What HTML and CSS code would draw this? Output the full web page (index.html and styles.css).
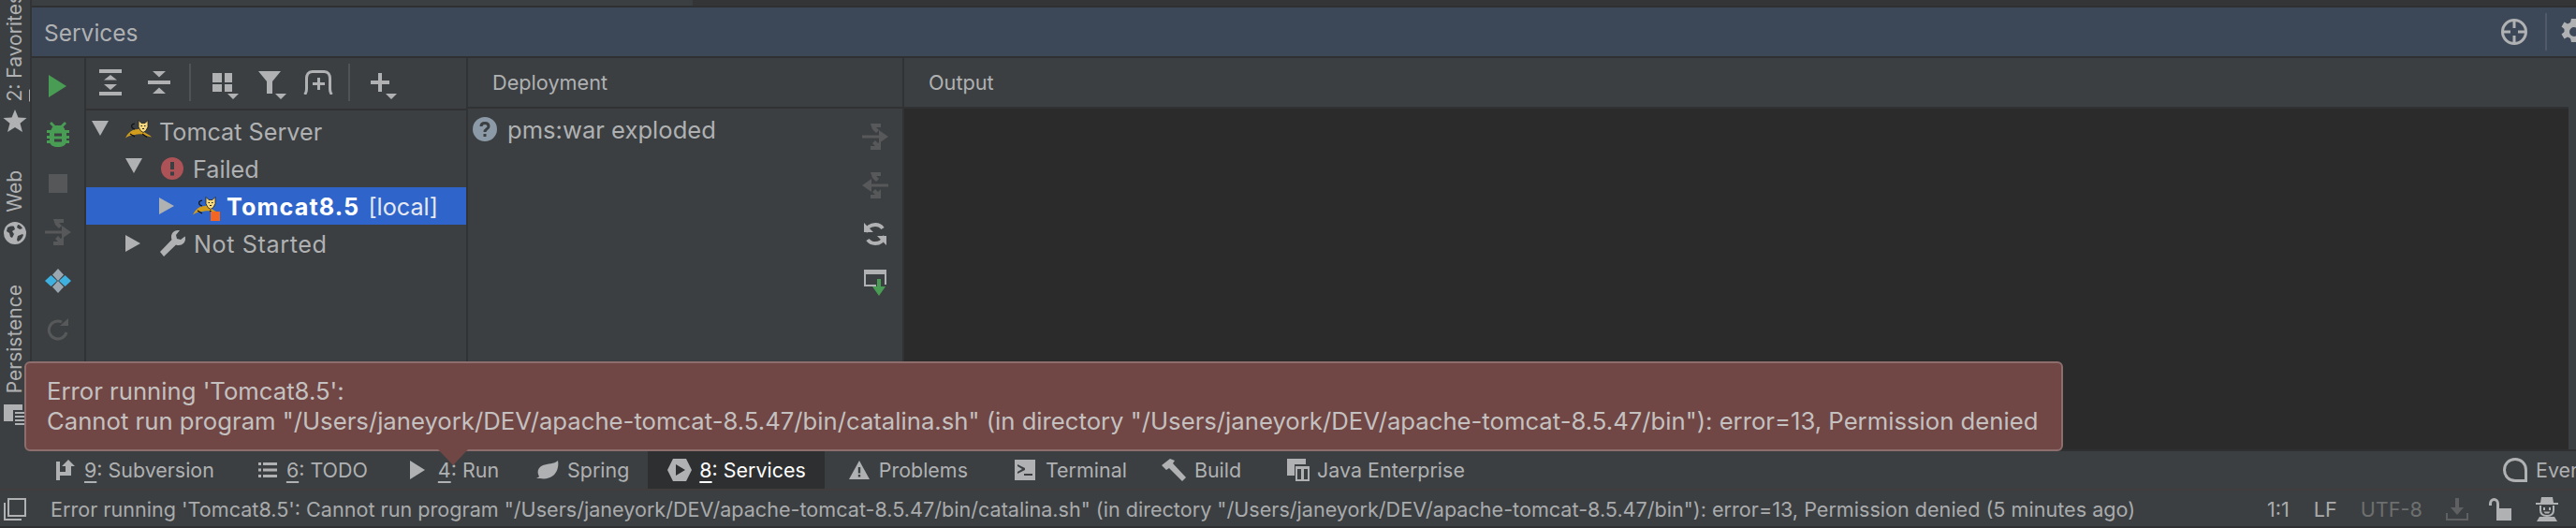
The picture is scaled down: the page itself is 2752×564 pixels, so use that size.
FILE: index.html
```html
<!DOCTYPE html>
<html lang="en">
<head>
<meta charset="utf-8">
<title>Services</title>
<link rel="stylesheet" href="styles.css">
</head>
<body>
<div class="app">
  <div class="main">
    <aside class="sidebar">
      <div class="side-group fav">
        <span class="vtext"><u>2</u>: Favorites</span>
        <svg class="side-icon" width="26" height="24" viewBox="0 0 26 24"><polygon class="f-lt" points="13,0 16.5,8.5 25.5,9 18.5,14.8 21,24 13,19 5,24 7.500,14.8 0.500,9 9.500,8.500"/></svg>
      </div>
      <div class="side-group web">
        <span class="vtext">Web</span>
        <svg class="side-icon" width="24" height="24" viewBox="0 0 24 24"><circle class="f-lt" cx="12" cy="12" r="12"/><path class="f-bg" d="M4 6c2-1 5-2 7-1l1 3-3 2 2 3-2 4-2-1-1-4-3-2zM15 15l5-2 1 1c-1 3-3 6-6 7l-1-2zM15 3c2 0 4 2 5 4l-3 1-3-2z"/></svg>
      </div>
      <div class="side-group persist">
        <span class="vtext">Persistence</span>
        <svg class="side-icon" width="24" height="24" viewBox="0 0 24 24"><path class="f-lt" d="M0 0h20v6H10v12H0z"/><path class="f-lt" d="M12 8h12v2H12zM12 12h12v2H12zM12 16h12v2H12zM12 20h12v2H12z"/></svg>
      </div>
    </aside>
    <div class="content">
      <div class="top-strip"><div class="top-strip-left"></div></div>
      <header class="title-bar">
        <span class="title">Services</span>
        <div class="title-actions">
          <svg width="28" height="28" viewBox="0 0 28 28"><circle class="s-lt" cx="14" cy="14" r="12.500" stroke-width="3"/><path class="f-lt" d="M12.500 2h3v8h-3zM12.500 18h3v8h-3zM2 12.500h8v3H2zM18 12.500h8v3h-8z"/></svg>
          <span class="title-sep"></span>
          <svg class="gear" width="28" height="28" viewBox="0 0 28 28"><path class="f-lt" fill-rule="evenodd" d="M11 0h6l1 4 3 1.500 3.500-2 3 5-3 2.500v3l3 2.500-3 5-3.500-2-3 1.500-1 4h-6l-1-4-3-1.500-3.500 2-3-5 3-2.500v-3l-3-2.500 3-5 3.500 2 3-1.500zM14 9a5 5 0 1 0 0 10 5 5 0 0 0 0-10z"/></svg>
        </div>
      </header>
      <div class="panes">
        <div class="action-bar">
          <span class="act"><svg width="20" height="24" viewBox="0 0 20 24"><polygon class="f-green" points="0,0 19,12 0,24"/></svg></span>
          <span class="act"><svg width="24" height="28" viewBox="0 0 24 28"><path class="f-green" fill-rule="evenodd" d="M5 0l4 4h6l4-4 2 2-3.500 3.500c1 1 1.500 2 2 3.500H24v3h-3v3h3v3h-3v2h3v3h-3.500c-1 2-3 4-8.500 4s-7.500-2-8.500-4H0v-3h3v-2H0v-3h3v-3H0V9h4.500c.5-1.500 1-2.500 2-3.500L3 2zM8 12.500v3h8v-3zM8 18.500v3h8v-3z"/></svg></span>
          <span class="act"><span class="stop"></span></span>
          <span class="act"><svg class="dim" width="28" height="28" viewBox="0 0 28 28"><use href="#deploy"/></svg></span>
          <span class="act"><svg width="28" height="26" viewBox="0 0 28 26"><polygon class="f-slate" points="14,0 20,6.500 14,13 8,6.500"/><polygon class="f-slate" points="14,13 20,19.500 14,26 8,19.500"/><polygon class="f-blue" points="6.500,7 13,13 6.500,19 0,13"/><polygon class="f-blue" points="21.500,7 28,13 21.500,19 15,13"/></svg></span>
          <span class="act"><svg width="24" height="25" viewBox="0 0 24 25"><path class="s-dim" d="M21 15a9.500 9.500 0 1 1-5-11" stroke-width="3"/><polygon class="f-dim" points="14,8 23,8 23,0"/></svg></span>
        </div>
        <section class="tree-col">
          <div class="tree-toolbar">
            <span class="tool"><svg width="24" height="28" viewBox="0 0 24 28"><path class="f-lt" d="M0 0h24v4H0zM0 24h24v4H0zM12 6l7 5.500H5zM5 16h14l-7 6z"/></svg></span>
            <span class="tool"><svg width="24" height="24" viewBox="0 0 24 24"><path class="f-lt" d="M5 0h14l-7 6.500zM0 10h24v4H0zM12 17.500l7 6.500H5z"/></svg></span>
            <span class="tool-sep"></span>
            <span class="tool tool-group"><svg width="28" height="28" viewBox="0 0 28 28"><path class="f-lt" d="M0 0h10v10H0zM13 0h8v10h-8zM0 12h10v8H0zM13 12h8v8h-8zM16 22h12l-6 6z"/></svg></span>
            <span class="tool tool-filter"><svg width="30" height="30" viewBox="0 0 30 30"><path class="f-lt" d="M0 0h24l-9 11v13H9V11zM18 24h12l-6 6z"/></svg></span>
            <span class="tool"><svg width="32" height="26" viewBox="0 0 32 26"><path class="s-lt" d="M1.500 26c2-2 2-3 2-6V9c0-4 2-7.500 6-7.500h13c4 0 6 3.500 6 7.500v11c0 3 0 4 2 6" stroke-width="3"/><path class="f-lt" d="M15 8h3v5h5v3h-5v5h-3v-5h-5v-3h5z"/></svg></span>
            <span class="tool-sep"></span>
            <span class="tool tool-add"><svg width="28" height="28" viewBox="0 0 28 28"><path class="f-lt" d="M8 0h4v8h8v4h-8v8H8v-8H0V8h8zM16 22h12l-6 6z"/></svg></span>
          </div>
          <ul class="tree">
            <li class="row depth-0">
              <svg class="arrow" width="18" height="16" viewBox="0 0 18 16"><polygon class="f-lt" points="0,0 18,0 9,16"/></svg>
              <svg class="cat" width="28" height="20" viewBox="0 0 28 20"><use href="#tomcat"/></svg>
              <span class="label">Tomcat Server</span>
            </li>
            <li class="row depth-1">
              <svg class="arrow" width="18" height="16" viewBox="0 0 18 16"><polygon class="f-lt" points="0,0 18,0 9,16"/></svg>
              <svg class="status-icon" width="24" height="24" viewBox="0 0 24 24"><circle class="f-red" cx="12" cy="12" r="12"/><path class="f-bg" d="M10 5h4v8h-4zM10 15.500h4v4h-4z"/></svg>
              <span class="label">Failed</span>
            </li>
            <li class="row depth-2 selected">
              <svg class="arrow" width="16" height="18" viewBox="0 0 16 18"><polygon class="f-lt" points="0,0 16,9 0,18"/></svg>
              <span class="cat-wrap">
                <svg class="cat" width="28" height="20" viewBox="0 0 28 20"><use href="#tomcat"/></svg>
                <span class="badge"></span>
              </span>
              <span class="label"><b>Tomcat8.5</b> [local]</span>
            </li>
            <li class="row depth-1b">
              <svg class="arrow" width="16" height="18" viewBox="0 0 16 18"><polygon class="f-lt" points="0,0 16,9 0,18"/></svg>
              <svg class="status-icon" width="27" height="28" viewBox="0 0 27 28"><path class="f-lt" d="M19 0c-4 0-7 3-7 7 0 1 0 2 .5 3L0 23l4 5 13-12.500c1 .5 2 .5 3 .5 4 0 7-3 7-7 0-1 0-2-.5-2.500L22 10l-4-1-1-4 4-5c-.5 0-1.500 0-2 0z"/></svg>
              <span class="label">Not Started</span>
            </li>
          </ul>
        </section>
        <section class="deploy-col">
          <div class="pane-head">Deployment</div>
          <div class="deploy-body">
            <div class="deploy-list">
              <svg class="q" width="26" height="26" viewBox="0 0 26 26"><circle class="f-slate2" cx="13" cy="13" r="13"/><path class="s-bg" d="M9 10c0-2.500 2-3.500 4-3.500s4 1 4 3.500c0 3-4 2.500-4 6" stroke-width="3"/><path class="f-bg" d="M11.500 18h3v3h-3z"/></svg>
              <span class="label">pms:war exploded</span>
            </div>
            <div class="deploy-tools">
              <span class="act"><svg class="dim" width="28" height="28" viewBox="0 0 28 28"><use href="#deploy"/></svg></span>
              <span class="act"><svg class="dim" width="28" height="28" viewBox="0 0 28 28"><use href="#undeploy"/></svg></span>
              <span class="act"><svg width="24" height="24" viewBox="0 0 24 24"><path class="s-lt" d="M2 10C3 5 7 2 12 2c3 0 6 1 8 4M22 14c-1 5-5 8-10 8-3 0-6-1-8-4" stroke-width="4"/><path class="f-lt" d="M0 0v10h10zM24 24V14H14z"/></svg></span>
              <span class="act"><svg width="24" height="28" viewBox="0 0 24 28"><path class="f-lt" d="M0 0h24v16h-2V5H2v11h11v2H0z"/><path class="f-green" d="M14 10h4v8h5l-7 10-7-10h5z"/></svg></span>
            </div>
          </div>
        </section>
        <section class="output-col">
          <div class="pane-head">Output</div>
          <div class="output-body"></div>
        </section>
        <div class="right-strip"></div>
      </div>
    </div>
  </div>

  <nav class="tabs">
    <div class="tab t-svn"><svg width="20" height="22" viewBox="0 0 20 22"><path class="f-lt" d="M0 2h4v20H0zM4 13h6V7H6l7-7 7 7h-4v10H4z"/></svg><span><u>9</u>: Subversion</span></div>
    <div class="tab t-todo"><svg width="20" height="16" viewBox="0 0 20 16"><path class="f-lt" d="M0 0h3v3H0zM5 0h15v3H5zM0 6.500h3v3H0zM5 6.500h15v3H5zM0 13h3v3H0zM5 13h15v3H5z"/></svg><span><u>6</u>: TODO</span></div>
    <div class="tab t-run"><svg width="16" height="20" viewBox="0 0 16 20"><polygon class="f-lt" points="0,0 16,10 0,20"/></svg><span><u>4</u>: Run</span></div>
    <div class="tab t-spring"><svg width="24" height="20" viewBox="0 0 24 20"><path class="f-lt" d="M23 0c1 5 0 12-5 16-4 3-9 4-14 3l-4 0c2-1 3-2 3-2C0 12 2 7 7 5c5-2 12-1 16-5z"/></svg><span>Spring</span></div>
    <div class="tab t-services active"><svg width="26" height="24" viewBox="0 0 26 24"><path class="f-lt" fill-rule="evenodd" d="M6 0h14l6 12-6 12H6L0 12zM9 6v12l10-6z"/></svg><span><u>8</u>: Services</span></div>
    <div class="tab t-problems"><svg width="22" height="20" viewBox="0 0 22 20"><path class="f-lt" fill-rule="evenodd" d="M11 0l11 20H0zM9.800 7v6.500h2.400V7zM9.800 15v2.500h2.400V15z"/></svg><span>Problems</span></div>
    <div class="tab t-term"><svg width="22" height="22" viewBox="0 0 22 22"><path class="f-lt" fill-rule="evenodd" d="M0 0h22v22H0zM3 5v2l5 3-5 3v2l8-4v-2zM10 15v2h9v-2z"/></svg><span>Terminal</span></div>
    <div class="tab t-build"><svg width="26" height="24" viewBox="0 0 26 24"><path class="f-lt" d="M0 7l9-7 5 2-2 3 14 15-4 4L8 10l-3 2z"/></svg><span>Build</span></div>
    <div class="tab t-java"><svg width="24" height="24" viewBox="0 0 24 24"><path class="f-lt" d="M0 0h20v6H8v12H0z"/><path class="f-lt" fill-rule="evenodd" d="M9 8h15v16H9zM11 11v11h4V11zM18 11v11h4V11z"/></svg><span>Java Enterprise</span></div>
    <div class="tab t-events"><svg width="26" height="26" viewBox="0 0 26 26"><path class="s-lt" d="M13 1.500c6.500 0 11.500 5 11.500 11.500v11.500H13C6.500 24.500 1.500 19.500 1.500 13S6.500 1.500 13 1.500z" stroke-width="3"/></svg><span>Event Log</span></div>
  </nav>

  <footer class="status">
    <svg class="status-toggle" width="24" height="24" viewBox="0 0 24 24"><path class="s-lt" d="M5 1h18v18H5zM1 5v18h18" stroke-width="2"/></svg>
    <span class="status-msg">Error running 'Tomcat8.5': Cannot run program "/Users/janeyork/DEV/apache-tomcat-8.5.47/bin/catalina.sh" (in directory "/Users/janeyork/DEV/apache-tomcat-8.5.47/bin"): error=13, Permission denied (5 minutes ago)</span>
    <span class="status-item pos">1:1</span>
    <span class="status-item lf">LF</span>
    <span class="status-item enc">UTF-8</span>
    <svg class="st-dl" width="24" height="24" viewBox="0 0 24 24"><path class="f-dim2" d="M10 0h4v10h5l-7 8-7-8h5zM0 16h2v6h20v-6h2v8H0z"/></svg>
    <svg class="st-lock" width="24" height="24" viewBox="0 0 24 24"><path class="f-lt" d="M8 11h16v13H8z"/><path class="s-lt" d="M1.500 8V6c0-2.500 2-4.500 4-4.500S9.500 3.500 9.500 6v5" stroke-width="3"/></svg>
    <svg class="st-hector" width="24" height="26" viewBox="0 0 24 26"><path class="f-lt" d="M6 0h12l1 6h5v2H0V6h5z"/><path class="s-lt" d="M5 9v5c0 4 3 6 7 6s7-2 7-6V9" stroke-width="2"/><path class="f-lt" d="M8 11h2v3H8zM14 11h2v3h-2zM8.500 15.500h7l-1.500 2h-4zM4 21h16l3 5H1z"/></svg>
  </footer>

  <div class="balloon">
    <p>Error running 'Tomcat8.5':</p>
    <p>Cannot run program "/Users/janeyork/DEV/apache-tomcat-8.5.47/bin/catalina.sh" (in directory "/Users/janeyork/DEV/apache-tomcat-8.5.47/bin"): error=13, Permission denied</p>
    <svg class="balloon-tip" width="32" height="18" viewBox="0 0 32 18"><polygon class="tip-fill" points="0,0 32,0 16,17"/></svg>
  </div>

  <svg class="defs" width="0" height="0">
    <defs>
      <g id="deploy">
        <path d="M0 12.500h18v3H0zM18 7l10 7-10 7z"/>
        <path d="M9 0h11v4l-5 0 3 3-3 3-4-4zM9 28h11V18l-3 3-3-3-3 3 3 3H9z"/>
      </g>
      <g id="undeploy">
        <path d="M10 12.500h18v3H10zM10 7L0 14l10 7z"/>
        <path d="M9 0h11v4l-5 0 3 3-3 3-4-4zM9 28h11V18l-3 3-3-3-3 3 3 3H9z"/>
      </g>
      <g id="tomcat">
        <path fill="#d29c1d" d="M0 19.500C3 13 8 10 13 10l4-1 3 4c2 2 6 3 8 5.500l-6-1.500c-4-2-8-2-12-1-4 0-7 1.500-10 3.500z"/>
        <path fill="none" stroke="#111" stroke-width="1.200" d="M10 10C6 9 5 5 10 4M5 15l5 3M18 15l5 3.500"/>
        <path fill="#f5d77e" stroke="#222" stroke-width=".8" d="M14 .5l3 3h4l3-3v7l-2 4-3 2-3-2-2-4z"/>
        <path fill="#222" d="M16.500 6h1.500v1h-1.500zM20 6h1.500v1H20zM18 9h2v1h-2z"/>
      </g>
    </defs>
  </svg>
</div>
</body>
</html>
```
FILE: styles.css
```css
* { box-sizing: border-box; }
html, body { margin: 0; padding: 0; }
body { background: #3c3f41; color: #afb1b3; font-family: Inter, Roboto, "Liberation Sans", sans-serif; font-size: 21.45px; }
ul { list-style: none; margin: 0; padding: 0; }
p { margin: 0; }
svg { display: block; flex: none; }
u { text-underline-offset: 4px; text-decoration-thickness: 2px; }

.f-lt { fill: #afb1b3; }
.f-bg { fill: #3c3f41; }
.f-dim { fill: #565859; }
.f-dim2 { fill: #5e6061; }
.f-green { fill: #499c54; }
.f-red { fill: #ad5256; }
.f-blue { fill: #3eb1e1; }
.f-slate { fill: #9aa7b0; }
.f-slate2 { fill: #8b9aa6; }
.s-lt { fill: none; stroke: #afb1b3; }
.s-dim { fill: none; stroke: #565859; }
.s-bg { fill: none; stroke: #3c3f41; }
.dim { fill: #565859; }

.app { position: relative; width: 2752px; height: 564px; overflow: hidden; display: flex; flex-direction: column; }
.main { display: flex; height: 482px; flex: none; }

.sidebar { width: 34px; flex: none; border-right: 2px solid #313335; overflow: hidden; display: flex; flex-direction: column; align-items: center; }
.side-group { display: flex; flex-direction: column; align-items: center; flex: none; }
.vtext { writing-mode: vertical-rl; transform: rotate(180deg); font-size: 21px; line-height: 26px; white-space: nowrap; }
.fav { margin-top: -7px; }
.fav .side-icon { margin-top: 9px; }
.web { margin-top: 41px; }
.web .side-icon { margin-top: 10px; }
.persist { margin-top: 43px; }
.persist .side-icon { margin-top: 12px; }

.content { flex: 1; min-width: 0; display: flex; flex-direction: column; }
.top-strip { height: 8px; flex: none; background: #333536; border-bottom: 2px solid #2f3031; }
.top-strip-left { width: 706px; height: 6px; background: #3c3f41; }
.title-bar { height: 54px; flex: none; background: #3c4757; border-bottom: 2px solid #2f3031; display: flex; align-items: center; justify-content: space-between; padding: 2px 0 0 13px; }
.title { font-size: 24.500px; }
.title-actions { display: flex; align-items: center; margin-right: -12px; margin-top: -2px; }
.title-sep { width: 2px; height: 40px; background: #50596a; margin-left: 19px; margin-right: 15px; }

.panes { flex: 1; min-height: 0; display: flex; border-bottom: 2px solid #2f3031; }
.action-bar { width: 58px; flex: none; border-right: 2px solid #303233; padding-top: 4px; display: flex; flex-direction: column; }
.act { height: 52px; display: flex; align-items: center; justify-content: center; flex: none; }
.stop { width: 20px; height: 20px; background: #555758; }

.tree-col { width: 408px; flex: none; border-right: 2px solid #303233; display: flex; flex-direction: column; }
.tree-toolbar { height: 56px; flex: none; border-bottom: 2px solid #303233; display: flex; align-items: center; padding-bottom: 2px; }
.tool { width: 52px; display: flex; align-items: center; justify-content: center; }
.tool-group { padding: 8px 0 0 10px; }
.tool-filter { padding: 6px 0 0 6px; }
.tool-add { padding: 8px 0 0 8px; }
.tool-sep { width: 2px; height: 40px; background: #505254; margin: 0 6px; }
.tree { padding-top: 2px; }
.row { height: 40px; display: flex; align-items: center; font-size: 25.200px; }
.row .label { white-space: pre; padding-top: 2px; }
.depth-0 { padding-left: 6px; }
.depth-0 .arrow { margin-top: -6px; }
.depth-0 .cat { margin-left: 18px; margin-top: -4px; }
.depth-0 .label { margin-left: 8px; }
.depth-1 { padding-left: 42px; }
.depth-1 .arrow { margin-top: -6px; }
.depth-1 .status-icon { margin-left: 20px; }
.depth-1 .label { margin-left: 10px; }
.depth-2 { padding-left: 78px; background: #2f65ca; color: #e6e9f0; }
.depth-2 b { color: #fff; font-weight: 700; letter-spacing: 1.100px; margin-right: 2px; }
.depth-2 .cat-wrap { position: relative; margin-left: 20px; }
.badge { position: absolute; right: -1px; bottom: -6px; width: 10px; height: 10px; background: #f26522; }
.depth-2 .label { margin-left: 8px; }
.depth-1b { padding-left: 42px; }
.depth-1b .status-icon { margin-left: 21px; }
.depth-1b .label { margin-left: 9px; letter-spacing: .6px; }

.deploy-col { width: 466px; flex: none; border-right: 2px solid #303233; display: flex; flex-direction: column; }
.pane-head { height: 54px; flex: none; border-bottom: 2px solid #303233; display: flex; align-items: center; padding-left: 26px; font-size: 21.700px; }
.deploy-body { flex: 1; display: flex; min-height: 0; }
.deploy-list { flex: 1; display: flex; align-items: flex-start; padding: 9px 0 0 5px; font-size: 25.600px; }
.deploy-list .label { margin-left: 11px; line-height: 28px; }
.deploy-tools { width: 56px; flex: none; padding: 4px 2px 0 0; display: flex; flex-direction: column; }

.output-col { flex: 1; min-width: 0; display: flex; flex-direction: column; }
.output-body { flex: 1; background: #2b2b2b; }
.right-strip { width: 8px; flex: none; background: #3c3f41; }

.tabs { height: 42px; flex: none; display: flex; align-items: stretch; border-bottom: 2px solid #413d3d; position: relative; }
.tab { display: flex; align-items: center; gap: 10px; white-space: nowrap; height: 40px; flex: none; padding: 0 20px; }
.t-svn { margin-left: 40px; }
.t-todo { margin-left: 7px; }
.t-run { margin-left: 5px; gap: 14px; }
.t-spring { margin-left: 0; gap: 9px; }
.t-services { padding: 0 20px 0 21px; gap: 8px; }
.t-problems { margin-left: 6px; }
.t-term { margin-left: 10px; gap: 11px; padding-right: 17px; }
.t-build { margin-left: 0; gap: 9px; }
.t-java { margin-left: 9px; gap: 8px; }
.active { background: #2d2f30; color: #fff; }
.t-events { position: absolute; left: 2654px; padding: 0 20px; gap: 9px; }

.status { height: 40px; flex: none; display: flex; align-items: center; border-bottom: 2px solid #2f3031; padding: 2px 0 0 4px; color: #a9abad; font-size: 21.600px; }
.status-msg { margin-left: 26px; white-space: nowrap; width: 2368px; flex: none; }
.status-item { flex: none; white-space: nowrap; }
.lf { margin-left: 26px; }
.enc { margin-left: 25px; color: #6d6f70; }
.st-dl { margin-left: 25px; }
.st-lock { margin-left: 22px; }
.st-hector { margin-left: 26px; }

.balloon { position: absolute; left: 26px; top: 386px; width: 2178px; height: 96px; background: #704745; border: 2px solid #8d6e6d; border-radius: 6px; padding: 14px 22px; font-size: 25.700px; line-height: 32px; color: #c4c1c0; white-space: nowrap; }
.balloon-tip { position: absolute; left: 440px; top: 92px; }
.tip-fill { fill: #704745; }
.defs { position: absolute; }
```
